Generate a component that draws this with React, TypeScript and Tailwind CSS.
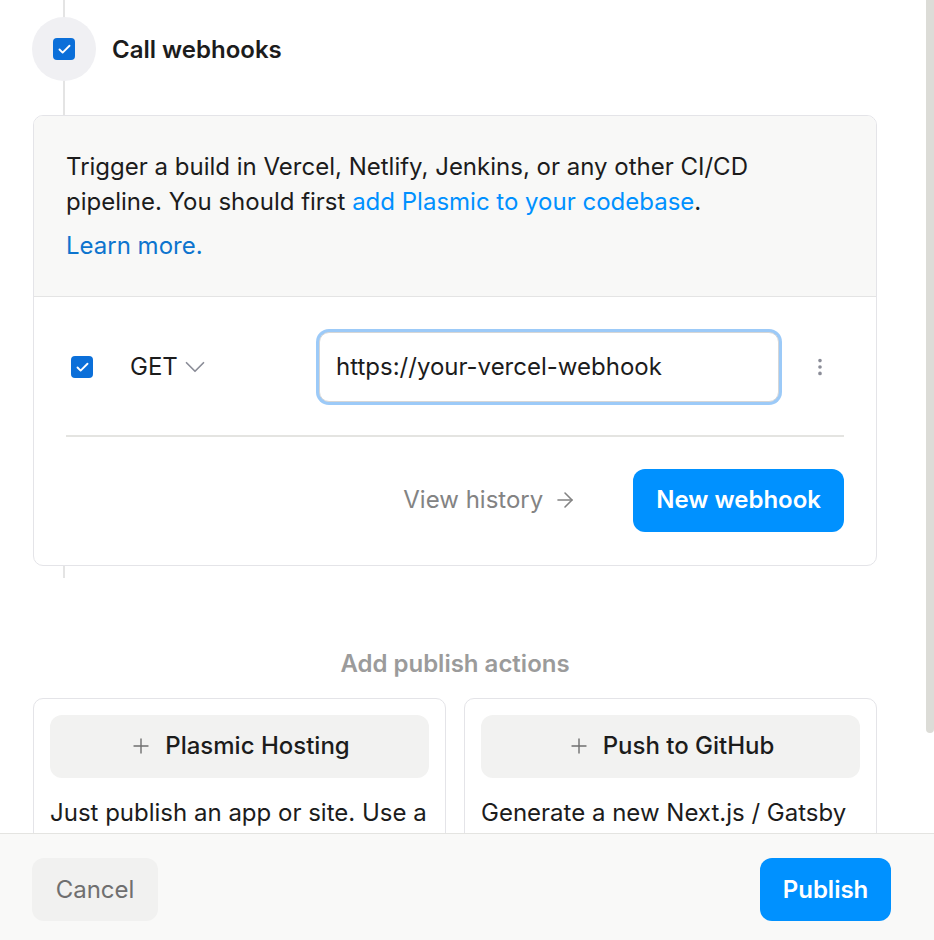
import { Check, ChevronDown, EllipsisVertical, Plus, ArrowRight } from "lucide-react";

const FONT = "font-['Inter','Noto_Sans',sans-serif]";

function Checkbox({ size = 22 }: { size?: number }) {
    return (
        <div
            className="flex items-center justify-center rounded-[4px] bg-[#0b6fd9]"
            style={{ width: size, height: size }}
        >
            <Check size={15} strokeWidth={3} className="text-white" />
        </div>
    );
}

function ActionCard({ title, text }: { title: string; text: string }) {
    return (
        <div className="h-[160px] rounded-[10px] border-[1.5px] border-[#e4e4e8] bg-white p-[16px]">
            <button className="flex h-[63px] w-full items-center justify-center gap-[12px] rounded-[12px] bg-[#f2f2f1] text-[24px] font-medium text-[#1c1c1c]">
                <Plus size={24} strokeWidth={1.4} className="text-[#6f6f6f]" />
                {title}
            </button>
            <p className="mt-[17px] text-[24px] leading-[35px] text-[#1c1c1c]">{text}</p>
        </div>
    );
}

export default function App() {
    return (
        <div className={`${FONT} relative flex h-[940px] w-[934px] flex-col overflow-hidden bg-white`}>
            {/* Scroll area */}
            <div className="relative flex-1 overflow-hidden">
                {/* timeline line */}
                <div className="absolute left-[63px] top-0 h-[578px] w-[2px] bg-[#e4e4e4]" />
                {/* scrollbar thumb */}
                <div className="absolute right-0 top-0 h-[733px] w-[8px] rounded-b-[5px] bg-[#dcdcd7]" />

                <div className="relative w-[877px] pl-[33px] pt-[17px]">
                    <div className="flex items-center">
                        <div className="-ml-[1px] flex h-[64px] w-[64px] items-center justify-center rounded-full bg-[#f0f0f3]">
                            <Checkbox />
                        </div>
                        <h2 className="ml-[16px] pt-[1px] text-[24px] font-semibold text-[#1c1c1c]">Call webhooks</h2>
                    </div>

                    <div className="mt-[34px] overflow-hidden rounded-[10px] border-[1.5px] border-[#e4e4e8] bg-white">
                        <div className="border-b-[1.5px] border-[#e4e4e4] bg-[#f8f8f7] px-[32px] pb-[33px] pt-[33px] text-[24px] leading-[35px] text-[#1c1c1c]">
                            <p>
                                Trigger a build in Vercel, Netlify, Jenkins, or any other CI/CD pipeline. You should
                                first <span className="text-[#0090ff]">add Plasmic to your codebase</span>.
                            </p>
                            <p className="mt-[9px] text-[#0d74ce]">Learn more.</p>
                        </div>

                        <div className="px-[32px] pb-[33px] pt-[35px]">
                            <div className="flex h-[70px] items-center">
                                <div className="ml-[5px]">
                                    <Checkbox />
                                </div>
                                <div className="ml-[37px] flex w-[189px] items-center text-[24px] text-[#1c1c1c]">
                                    GET
                                    <ChevronDown size={34} strokeWidth={1.2} className="text-[#8b8d98]" />
                                </div>
                                <div className="flex h-[70px] w-[460px] items-center rounded-[10px] border-[1.5px] border-[#d6d6d6] bg-white px-[16px] text-[24px] text-[#1c1c1c] shadow-[0_0_0_3px_#9ccaf8]">
                                    https://your-vercel-webhook
                                </div>
                                <EllipsisVertical size={22} strokeWidth={2} className="ml-[30px] text-[#8b8d98]" />
                            </div>

                            <div className="mt-[33px] h-[1.5px] bg-[#e4e4e1]" />

                            <div className="mt-[32px] flex items-center justify-end gap-[56px]">
                                <span className="flex items-center gap-[10px] text-[24px] text-[#838383]">
                                    View history
                                    <ArrowRight size={24} strokeWidth={1.6} />
                                </span>
                                <button className="h-[63px] rounded-[12px] bg-[#0091ff] px-[23px] text-[24px] font-semibold text-white">
                                    New webhook
                                </button>
                            </div>
                        </div>
                    </div>

                    <p className="mt-[81px] text-center text-[24px] font-semibold leading-[34px] text-[#9b9b9b]">
                        Add publish actions
                    </p>

                    <div className="mt-[17px] grid grid-cols-2 gap-[18px]">
                        <ActionCard title="Plasmic Hosting" text="Just publish an app or site. Use a" />
                        <ActionCard title="Push to GitHub" text="Generate a new Next.js / Gatsby" />
                    </div>
                </div>
            </div>

            {/* Footer */}
            <div className="flex h-[107px] shrink-0 items-start justify-between border-t-[1.5px] border-[#e4e4e1] bg-[#f9f9f8] pl-[32px] pr-[43px] pt-[24px]">
                <button className="h-[63px] w-[126px] rounded-[12px] bg-[#f1f1f0] text-[24px] text-[#6f6f6f]">Cancel</button>
                <button className="h-[63px] w-[131px] rounded-[12px] bg-[#0091ff] text-[24px] font-semibold text-white">
                    Publish
                </button>
            </div>
        </div>
    );
}
